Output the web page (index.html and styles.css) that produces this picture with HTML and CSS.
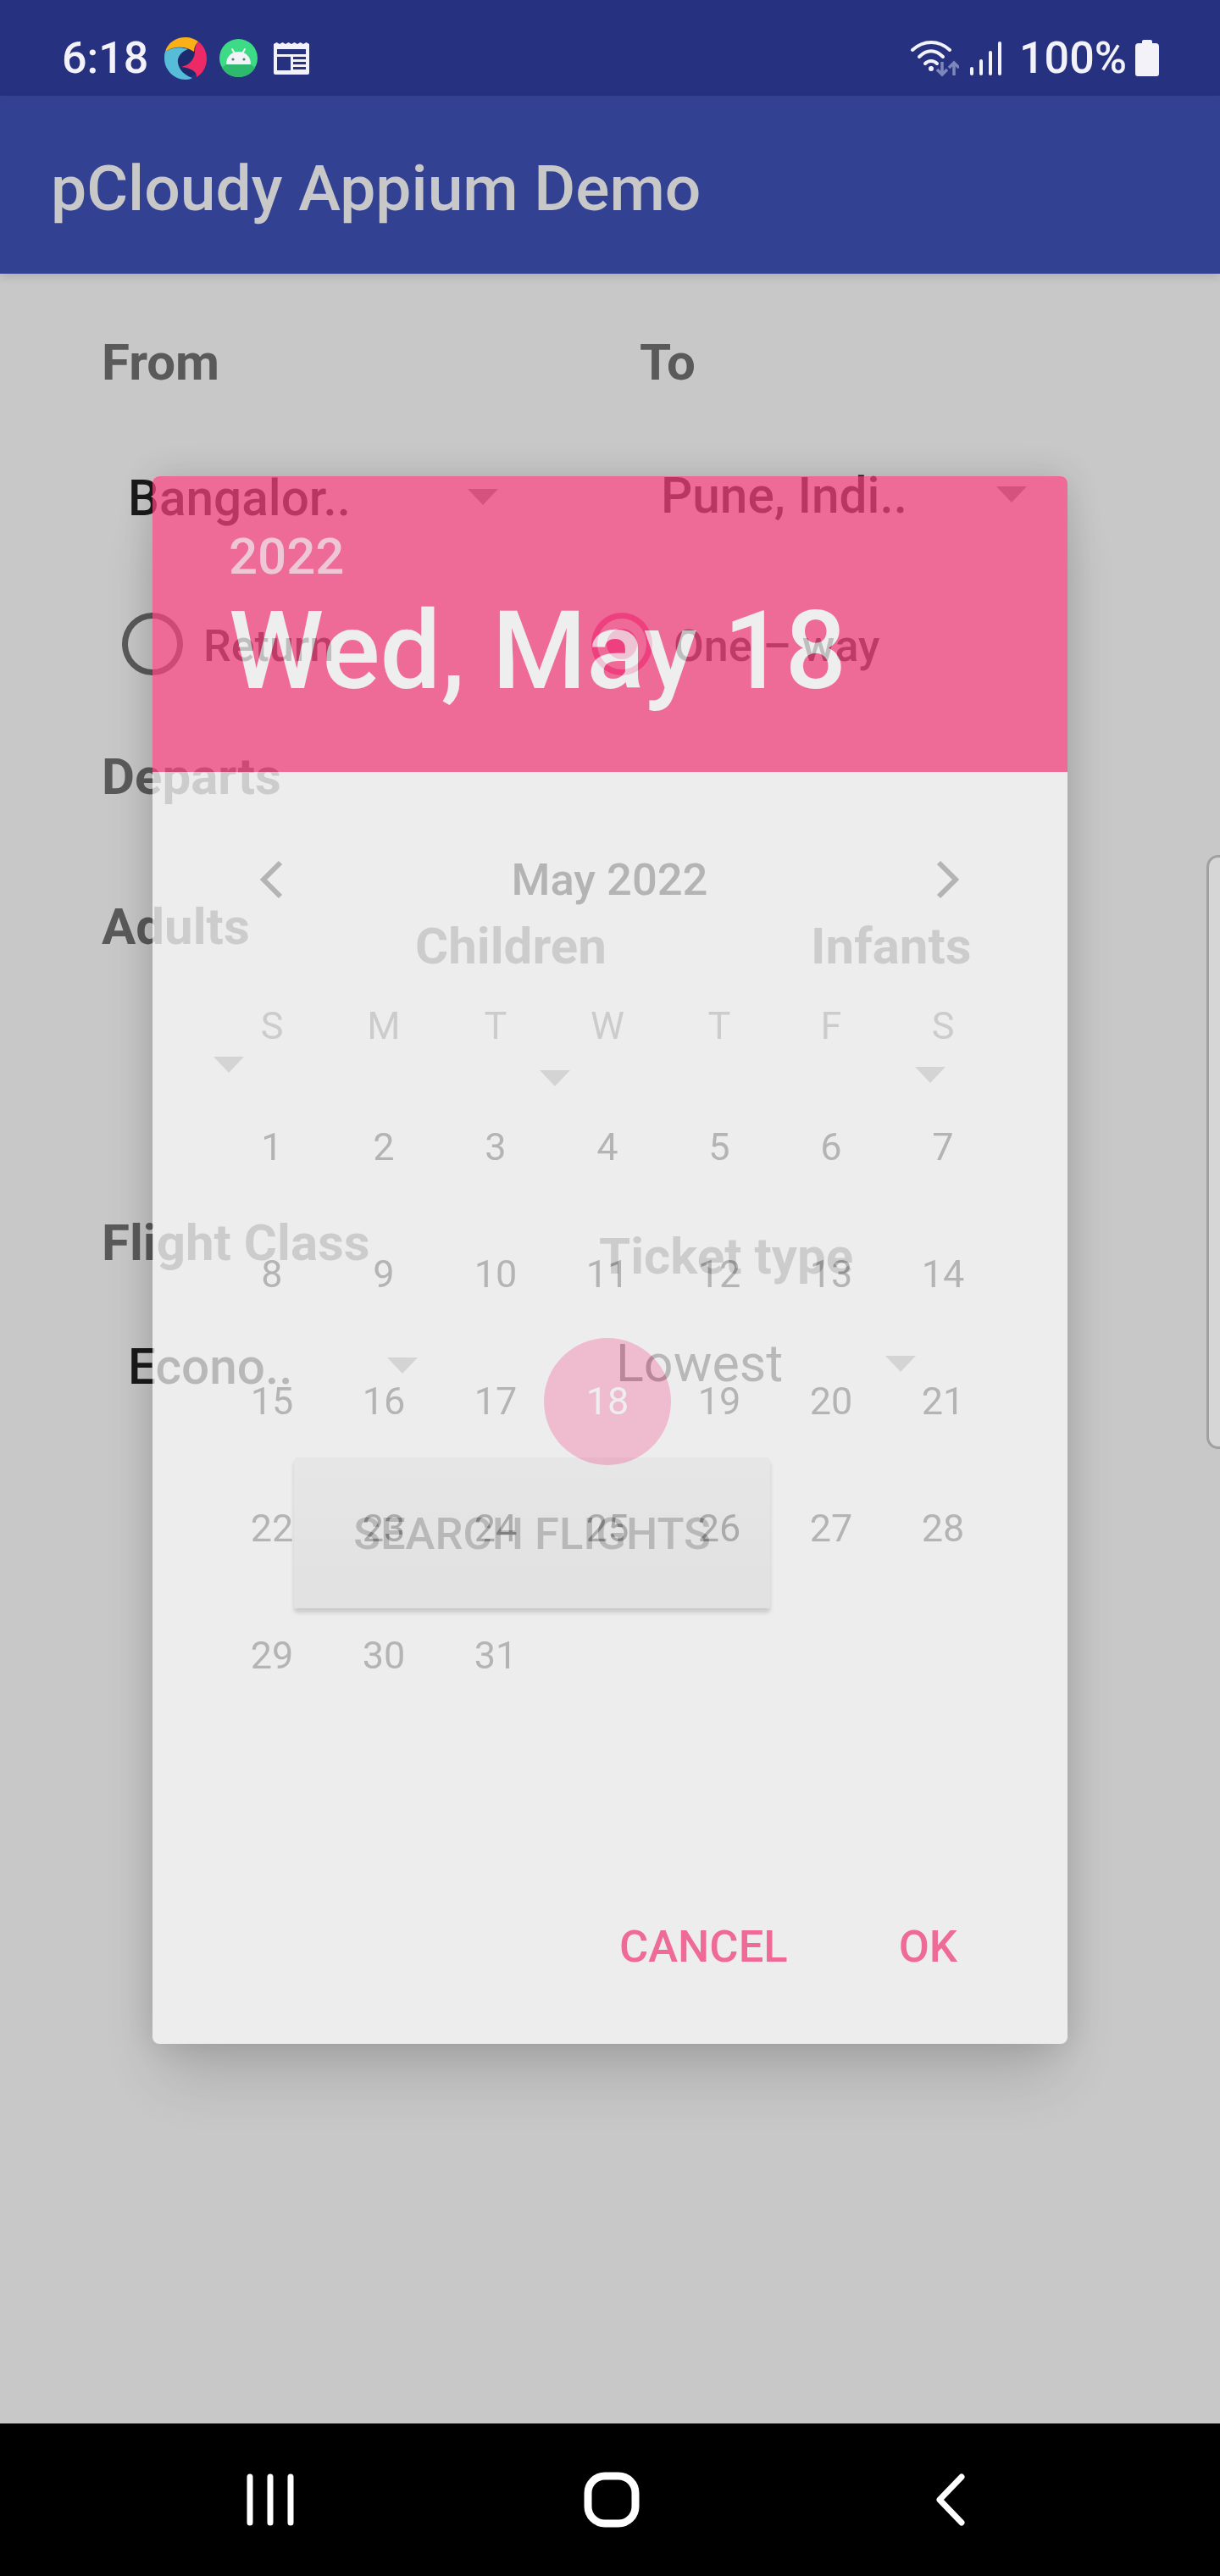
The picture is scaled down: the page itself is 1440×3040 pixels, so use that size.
FILE: index.html
```html
<!DOCTYPE html>
<html>

<head>
    <title>pCloudy Appium Demo</title>
    <link rel="stylesheet" href="styles.css">
</head>

<body>
    <div class="screen">
        <div class="status-bar">
            <div class="status-left">
                <span class="status-text">6:18</span>
                <svg class="icon-swirl" viewBox="0 0 50 50">
                    <circle cx="25" cy="25" r="22" fill="#1d2a6e" />
                    <path fill="#fbb016" d="M1 17C4 6 14 0 25 0C31 0 36 2 40 5C36 9 35 13 35 17C25 10 11 10 1 17Z" />
                    <path fill="#ee2a66" d="M40 5C47 10 50 18 50 25C50 35 45 43 38 47C39 40 30 36 20 35C28 33 35 28 36 18C36 12 37 8 40 5Z" />
                    <path fill="#56bcd8" d="M1 17C0 20 0 22 0 25C0 38 11 50 25 50C29 50 31 49 33 48C24 45 17 38 16 30C15 23 20 17 28 14C18 11 8 12 1 17Z" />
                </svg>
                <svg class="icon-droid" viewBox="0 0 45 45">
                    <circle cx="22.5" cy="22.5" r="22.5" fill="#3ddb85" />
                    <path fill="#2fb96f" d="M8 30H37L42 34C38 41 31 45 22.500 45C14 45 7 41 3 34Z" />
                    <path fill="#f2f2f8" d="M8 30C8 21 14 15 22.500 15C31 15 37 21 37 30Z" />
                    <path stroke="#f2f2f8" stroke-width="2" stroke-linecap="round" d="M15 12L18 17M30 12L27 17" />
                    <circle cx="16" cy="24" r="1.600" fill="#3c8a68" />
                    <circle cx="29" cy="24" r="1.600" fill="#3c8a68" />
                </svg>
                <svg class="icon-news" viewBox="0 0 42 38">
                    <path fill="#f2f2f8" d="M0 2L3.500 0L7 2L10.500 0L14 2L17.500 0L21 2L24.500 0L28 2L31.500 0L35 2L38.500 0L42 2V36Q42 38 40 38H2Q0 38 0 36Z" />
                    <path fill="#26327f" d="M4 8H38V14H4ZM4 17H20V33H4ZM23 17H38V20H23ZM23 23H38V26H23ZM23 29H38V32H23Z" />
                </svg>
            </div>
            <div class="status-right">
                <svg class="icon-wifi" viewBox="0 0 57 44">
                    <g fill="none" stroke="#f2f2f8" stroke-width="4" stroke-linecap="round">
                        <path d="M2 12C15 0 33 0 46 12" />
                        <path d="M10 20C19 11 29 11 38 20" />
                        <path d="M17 28C21 24 27 24 31 28" />
                    </g>
                    <circle cx="24" cy="34" r="3" fill="#f2f2f8" />
                    <path fill="none" stroke="#7d87bb" stroke-width="3.500" d="M37 26V41M31 35L37 41L43 35M51 42V27M45 33L51 27L57 33" />
                </svg>
                <svg class="icon-signal" viewBox="0 0 37 40">
                    <g fill="#f2f2f8">
                        <rect x="0" y="30" width="4" height="10" rx="2" />
                        <rect x="11" y="21" width="4" height="19" rx="2" />
                        <rect x="22" y="11" width="4" height="29" rx="2" />
                        <rect x="33" y="0" width="4" height="40" rx="2" />
                    </g>
                </svg>
                <span class="status-text">100%</span>
                <svg class="icon-battery" viewBox="0 0 28 43">
                    <path fill="#f2f2f8" d="M8 2Q8 0 10 0H18Q20 0 20 2V4H24Q28 4 28 8V40Q28 43 25 43H3Q0 43 0 40V8Q0 4 4 4H8Z" />
                </svg>
            </div>
        </div>

        <header class="app-bar">pCloudy Appium Demo</header>

        <!-- formulario atras do dialogo -->
        <main class="form">
            <div class="row row-labels">
                <span class="label from-cell">From</span>
                <span class="label">To</span>
            </div>
            <div class="row row-route">
                <div class="spinner spinner-from">
                    <span>Bangalor..</span>
                    <i class="caret"></i>
                </div>
                <div class="spinner spinner-to">
                    <span>Pune, Indi..</span>
                    <i class="caret"></i>
                </div>
            </div>
            <div class="row row-trip">
                <div class="radio-item radio-return">
                    <i class="radio"></i>
                    <span>Return</span>
                </div>
                <div class="radio-item radio-oneway">
                    <i class="radio checked"></i>
                    <span>One – way</span>
                </div>
            </div>
            <div class="row row-departs">
                <span class="label">Departs</span>
            </div>
            <div class="row row-people">
                <span class="label adults-cell">Adults</span>
                <span class="label children-cell">Children</span>
                <span class="label infants-cell">Infants</span>
            </div>
            <div class="row row-counts">
                <i class="caret count-a"></i>
                <i class="caret count-b"></i>
                <i class="caret count-c"></i>
            </div>
            <div class="row row-class">
                <span class="label class-cell">Flight Class</span>
                <span class="label ticket-cell">Ticket type</span>
            </div>
            <div class="row row-choices">
                <div class="spinner spinner-class">
                    <span>Econo..</span>
                    <i class="caret"></i>
                </div>
                <div class="spinner spinner-ticket">
                    <span>Lowest</span>
                    <i class="caret"></i>
                </div>
            </div>
            <button class="search-btn">SEARCH FLIGHTS</button>
        </main>

        <nav class="nav-bar">
            <svg class="nav-recents" viewBox="0 0 56 62">
                <g fill="none" stroke="#fff" stroke-width="7" stroke-linecap="round">
                    <path d="M4 4V58M28 4V58M52 4V58" />
                </g>
            </svg>
            <svg class="nav-home" viewBox="0 0 66 66">
                <rect x="5" y="5" width="56" height="56" rx="20" fill="none" stroke="#fff" stroke-width="9" />
            </svg>
            <svg class="nav-back" viewBox="0 0 36 62">
                <path d="M31 4L5 31L31 58" fill="none" stroke="#fff" stroke-width="7" stroke-linecap="round" stroke-linejoin="round" />
            </svg>
        </nav>

        <div class="side-tab"></div>

        <div class="dialog">
            <div class="dialog-head">
                <div class="dialog-year">2022</div>
                <div class="dialog-date">Wed, May 18</div>
            </div>
            <div class="dialog-body">
                <div class="month-row">
                    <svg class="chevron" viewBox="0 0 30 46">
                        <path d="M26 3L6 23L26 43" fill="none" stroke="#adadad" stroke-width="6" />
                    </svg>
                    <span class="month-name">May 2022</span>
                    <svg class="chevron" viewBox="0 0 30 46">
                        <path d="M4 3L24 23L4 43" fill="none" stroke="#adadad" stroke-width="6" />
                    </svg>
                </div>
                <div class="calendar" id="calendar"></div>
            </div>
            <div class="dialog-actions">
                <span>CANCEL</span>
                <span>OK</span>
            </div>
        </div>
    </div>

    <script>
        // Monta a grade do mes de maio de 2022
        const calendar = document.getElementById("calendar");

        ["S", "M", "T", "W", "T", "F", "S"].forEach(function (name) {
            const cell = document.createElement("span");
            cell.className = "weekday";
            cell.textContent = name;
            calendar.appendChild(cell);
        });

        for (let day = 1; day <= 31; day++) {
            const cell = document.createElement("span");
            cell.className = day === 18 ? "day selected" : "day";
            cell.textContent = day;
            calendar.appendChild(cell);
        }
    </script>
</body>

</html>
```

FILE: styles.css
```css
* {
    box-sizing: border-box;
}

body {
    margin: 0;
    font-family: Roboto, "Liberation Sans", sans-serif;
    background-color: #c8c8c8;
}

i {
    display: block;
}

.screen {
    position: relative;
    width: 1440px;
    height: 3040px;
    overflow: hidden;
    display: flex;
    flex-direction: column;
}

/* barra de status */
.status-bar {
    height: 113px;
    flex: none;
    display: flex;
    justify-content: space-between;
    background-color: #26327f;
    padding: 24px 72px 0 73px;
}

.status-left,
.status-right {
    display: flex;
    align-items: center;
}

.status-text {
    font-size: 52px;
    font-weight: 500;
    color: #f2f2f8;
    line-height: 60px;
}

.icon-swirl {
    width: 50px;
    height: 50px;
    margin-left: 19px;
}

.icon-droid {
    width: 45px;
    height: 45px;
    margin-left: 15px;
}

.icon-news {
    width: 42px;
    height: 38px;
    margin-left: 19px;
}

.icon-wifi {
    width: 57px;
    height: 44px;
}

.icon-signal {
    width: 37px;
    height: 40px;
    margin-left: 13px;
    margin-right: 21px;
}

.icon-battery {
    width: 28px;
    height: 43px;
    margin-left: 10px;
}

.app-bar {
    height: 210px;
    flex: none;
    background-color: #324191;
    color: #c8c8c8;
    font-size: 75px;
    font-weight: 500;
    line-height: 210px;
    padding: 4px 0 0 60px;
    box-shadow: 0 4px 10px rgba(0, 0, 0, 0.12);
    position: relative;
}

/* formulario */
.form {
    flex: 1;
    padding-top: 70px;
}

.row {
    display: flex;
    padding-left: 120px;
}

.label {
    display: block;
    font-size: 60px;
    font-weight: 700;
    line-height: 70px;
    color: #5a5a5a;
    white-space: nowrap;
}

.from-cell {
    width: 635px;
}

.row-route {
    margin-top: 87px;
    padding-left: 151px;
}

.spinner {
    display: flex;
    justify-content: space-between;
    font-size: 58.5px;
    font-weight: 500;
    line-height: 70px;
    color: #1a1a1a;
}

.spinner-from {
    width: 437px;
    margin-top: 3px;
    margin-right: 192px;
}

.spinner-to {
    width: 432px;
}

.caret {
    width: 0;
    height: 0;
    border-left: 18.5px solid transparent;
    border-right: 18.5px solid transparent;
    border-top: 19px solid #757575;
    margin-top: 24px;
}

.row-trip {
    margin-top: 100px;
    padding-left: 144px;
}

.radio-item {
    display: flex;
    font-size: 52px;
    font-weight: 500;
    line-height: 60px;
    color: #2a2a2a;
}

.radio-item span {
    margin-top: 10px;
}

.radio-return {
    width: 554px;
    gap: 24px;
}

.radio-oneway {
    gap: 25px;
}

.radio {
    width: 72px;
    height: 74px;
    border: 7px solid #5a5a5a;
    border-radius: 50%;
}

.radio.checked {
    border-color: #c83c76;
    position: relative;
}

.radio.checked::after {
    content: "";
    position: absolute;
    left: 11px;
    top: 12px;
    width: 36px;
    height: 36px;
    border-radius: 50%;
    background-color: #c83c76;
}

.row-departs {
    margin-top: 85px;
}

.row-people {
    margin-top: 107px;
}

.adults-cell {
    width: 370px;
}

.children-cell {
    width: 467px;
    margin-top: 23px;
}

.infants-cell {
    margin-top: 23px;
}

.row-counts {
    margin-top: 95px;
    height: 34px;
    padding-left: 252px;
}

.row-counts .caret {
    margin-top: 0;
}

.count-a {
    margin-right: 349px;
}

.row-counts .count-b {
    margin-top: 16px;
    margin-right: 407px;
}

.row-counts .count-c {
    margin-top: 12px;
}

.row-class {
    margin-top: 151px;
}

.class-cell {
    width: 587px;
}

.ticket-cell {
    margin-top: 16px;
}

.row-choices {
    margin-top: 58px;
    padding-left: 151px;
}

.spinner-class {
    width: 342px;
    margin-top: 2px;
    margin-right: 234px;
}

.spinner-ticket {
    width: 354px;
    font-size: 61px;
    font-weight: 400;
    margin-top: -2px;
}

.spinner-ticket .caret {
    margin-top: 26px;
}

.search-btn {
    display: block;
    margin: 72px 0 0 347px;
    width: 562px;
    height: 178px;
    border: none;
    padding: 2px 0 0;
    border-radius: 4px;
    background: linear-gradient(#b0b0b0, #a0a0a0);
    color: #1a1a1a;
    font-family: inherit;
    font-size: 52.5px;
    font-weight: 500;
    box-shadow: 0 5px 5px rgba(0, 0, 0, 0.6);
}

.nav-bar {
    height: 180px;
    flex: none;
    background-color: #000;
    position: relative;
    display: flex;
    align-items: center;
}

.nav-recents {
    width: 56px;
    height: 62px;
    margin-left: 291px;
}

.nav-home {
    width: 66px;
    height: 66px;
    margin-left: 342px;
}

.nav-back {
    width: 36px;
    height: 62px;
    margin-left: 349px;
}

.side-tab {
    position: absolute;
    left: 1424px;
    top: 1009px;
    width: 60px;
    height: 701px;
    background-color: #d6d6d6;
    border: 3px solid #a0a0a0;
    border-radius: 14px;
}

/* dialogo do calendario, ainda meio transparente */
.dialog {
    position: absolute;
    left: 180px;
    top: 562px;
    width: 1080px;
    height: 1850px;
    border-radius: 8px;
    background-color: #fefefe;
    opacity: 0.7;
    display: flex;
    flex-direction: column;
    box-shadow: 0 50px 70px -10px rgba(0, 0, 0, 0.2), 0 0 44px rgba(0, 0, 0, 0.22);
}

.dialog-head {
    height: 349px;
    flex: none;
    background-color: #ff4383;
    border-radius: 8px 8px 0 0;
    padding: 60px 0 0 90px;
}

.dialog-year {
    font-size: 60px;
    font-weight: 500;
    line-height: 70px;
    color: #ffc8df;
}

.dialog-date {
    font-size: 127.5px;
    font-weight: 500;
    line-height: 150px;
    margin-top: 2px;
    white-space: nowrap;
    color: #fff;
}

.dialog-body {
    flex: 1;
    padding: 89px 126px 0 125px;
}

.month-row {
    display: flex;
    justify-content: space-between;
    align-items: center;
    height: 76px;
}

.chevron {
    width: 30px;
    height: 46px;
}

.month-name {
    font-size: 52.5px;
    font-weight: 500;
    color: #adadad;
}

.calendar {
    display: grid;
    grid-template-columns: repeat(7, 132px);
    margin: 105px 0 0 -50px;
}

.weekday {
    height: 98px;
    line-height: 60px;
    text-align: center;
    font-size: 45px;
    color: #cecece;
}

.day {
    position: relative;
    height: 150px;
    line-height: 150px;
    text-align: center;
    font-size: 45px;
    color: #adadad;
}

.day.selected {
    color: #fff;
    z-index: 0;
}

.day.selected::before {
    content: "";
    position: absolute;
    left: -9px;
    top: 0;
    width: 150px;
    height: 150px;
    border-radius: 50%;
    background-color: #ffb7d3;
    z-index: -1;
}

.dialog-actions {
    flex: none;
    display: flex;
    justify-content: flex-end;
    gap: 131px;
    padding: 0 130px 85px 0;
    font-size: 52.5px;
    font-weight: 500;
    line-height: 60px;
    color: #ff4383;
}
```
